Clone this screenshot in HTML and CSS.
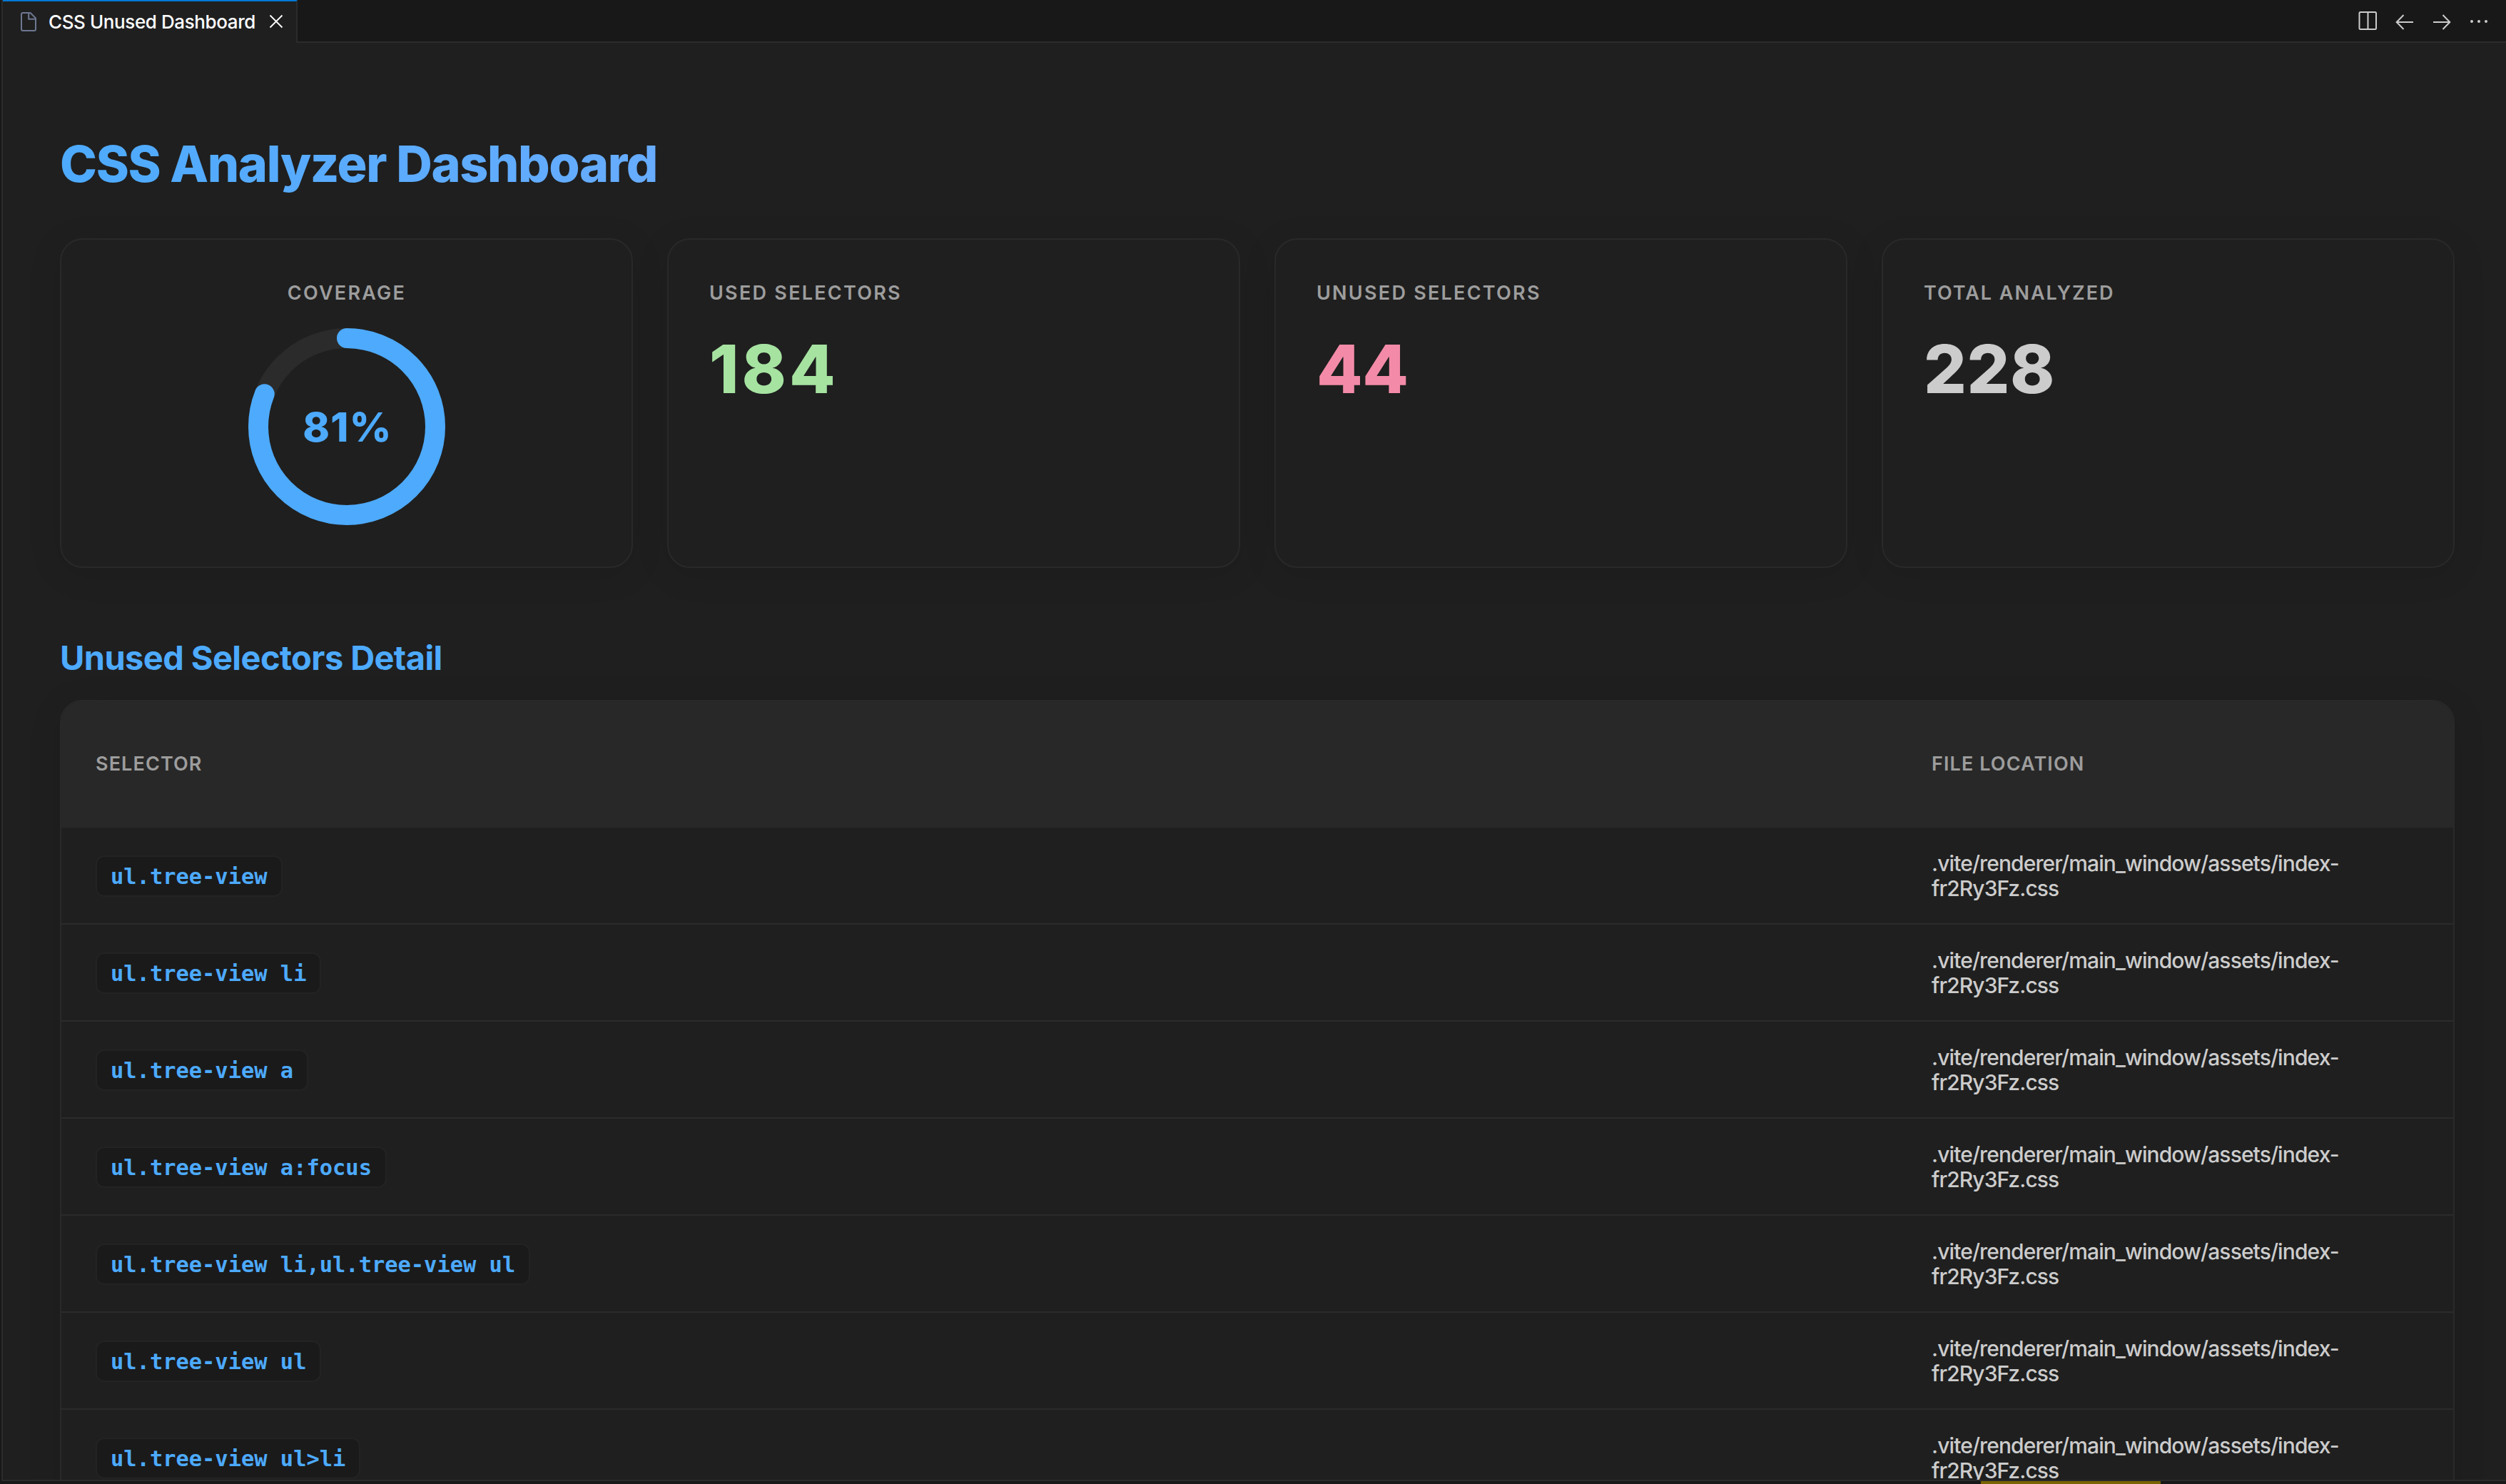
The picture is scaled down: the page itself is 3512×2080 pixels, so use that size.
FILE: index.html
```html
<!DOCTYPE html>
<html lang="en">
<head>
<meta charset="utf-8">
<title>CSS Unused Dashboard</title>
<link rel="stylesheet" href="styles.css">
</head>
<body>
<div class="window">
  <div class="editor">
    <header class="tabbar">
      <div class="tab">
        <svg class="tab-file" width="24" height="30" viewBox="0 0 24 30" fill="none" stroke="#6d7891" stroke-width="2" stroke-linejoin="round"><path d="M4 3H14.5L22 10.5V26a2 2 0 0 1-2 2H4a2 2 0 0 1-2-2V5a2 2 0 0 1 2-2z"/><path d="M12.2 3V11.8H22"/></svg>
        <span class="tab-title">CSS Unused Dashboard</span>
        <svg class="tab-close" width="20" height="20" viewBox="0 0 20 20" fill="none" stroke="#fff" stroke-width="1.8"><path d="M1.5 1.5L18.5 18.5M18.5 1.5L1.5 18.5"/></svg>
      </div>
      <div class="actions">
        <svg width="26" height="26" viewBox="0 0 26 26" fill="none" stroke="#ccc" stroke-width="2"><rect x="1.500" y="1" width="23.500" height="24" rx="1.5"/><path d="M13.500 1V25"/></svg>
        <svg width="26" height="26" viewBox="0 0 26 26" fill="none" stroke="#ccc" stroke-width="2"><path d="M25 15H2M11.500 5L1.700 15L11.500 25"/></svg>
        <svg width="26" height="26" viewBox="0 0 26 26" fill="none" stroke="#ccc" stroke-width="2"><path d="M1 15H24M14.500 5L24.300 15L14.500 25"/></svg>
        <svg width="26" height="26" viewBox="0 0 26 26" fill="#ccc"><circle cx="3" cy="14" r="2"/><circle cx="13" cy="14" r="2"/><circle cx="23" cy="14" r="2"/></svg>
      </div>
    </header>
    <main class="dashboard">
      <h1 class="title">CSS Analyzer Dashboard</h1>
      <section class="cards">
        <article class="card card-coverage">
          <h3 class="label">COVERAGE</h3>
          <div class="ring">
            <svg width="280" height="280" viewBox="0 0 280 280" fill="none" stroke-width="28"><circle cx="140" cy="140" r="124" stroke="#2b2b2b"/><circle cx="140" cy="140" r="124" stroke="#4daafc" stroke-linecap="round" pathLength="100" stroke-dasharray="81 100" transform="rotate(-90 140 140)"/></svg>
            <span class="percent">81%</span>
          </div>
        </article>
        <article class="card">
          <h3 class="label">USED SELECTORS</h3>
          <div class="value value-used">184</div>
        </article>
        <article class="card">
          <h3 class="label">UNUSED SELECTORS</h3>
          <div class="value value-unused">44</div>
        </article>
        <article class="card">
          <h3 class="label label-total">TOTAL ANALYZED</h3>
          <div class="value">228</div>
        </article>
      </section>
      <h2 class="subtitle">Unused Selectors Detail</h2>
      <section class="table">
        <div class="head"><div class="cell">SELECTOR</div><div class="cell">FILE LOCATION</div></div>
        <div class="row"><div class="cell"><code class="chip">ul.tree-view</code></div><div class="cell path">.vite/renderer/main_window/assets/index-fr2Ry3Fz.css</div></div>
        <div class="row"><div class="cell"><code class="chip">ul.tree-view li</code></div><div class="cell path">.vite/renderer/main_window/assets/index-fr2Ry3Fz.css</div></div>
        <div class="row"><div class="cell"><code class="chip">ul.tree-view a</code></div><div class="cell path">.vite/renderer/main_window/assets/index-fr2Ry3Fz.css</div></div>
        <div class="row"><div class="cell"><code class="chip">ul.tree-view a:focus</code></div><div class="cell path">.vite/renderer/main_window/assets/index-fr2Ry3Fz.css</div></div>
        <div class="row"><div class="cell"><code class="chip">ul.tree-view li,ul.tree-view ul</code></div><div class="cell path">.vite/renderer/main_window/assets/index-fr2Ry3Fz.css</div></div>
        <div class="row"><div class="cell"><code class="chip">ul.tree-view ul</code></div><div class="cell path">.vite/renderer/main_window/assets/index-fr2Ry3Fz.css</div></div>
        <div class="row"><div class="cell"><code class="chip">ul.tree-view ul&gt;li</code></div><div class="cell path">.vite/renderer/main_window/assets/index-fr2Ry3Fz.css</div></div>
      </section>
    </main>
  </div>
  <footer class="statusbar"><div class="status-warning"></div></footer>
</div>
</body>
</html>
```
FILE: styles.css
```css
* { box-sizing: border-box; }
body { margin: 0; background: #181818; font-family: Inter, "Liberation Sans", sans-serif; color: #ccc; }
h1, h2, h3 { margin: 0; }
svg { display: block; flex: none; }

.window { width: 3512px; height: 2080px; display: flex; flex-direction: column; overflow: hidden; }
.editor { height: 2076px; flex: none; margin-left: 2px; border-left: 2px solid #2b2b2b; background: #1f1f1f; overflow: hidden; border-bottom: 2px solid #2b2b2b; }

/* Tab strip */
.tabbar { height: 60px; display: flex; background: #181818; }
.tab { width: 413px; height: 60px; flex: none; display: flex; align-items: center; padding: 0 0 2px 24px; background: #1f1f1f; border-top: 2px solid #0078d4; border-right: 2px solid #2b2b2b; }
.tab-title { width: 308px; margin-left: 16px; padding-top: 2px; font-size: 26px; font-weight: 450; line-height: 32px; letter-spacing: -0.4px; color: #fff; white-space: nowrap; }
.actions { flex: 1; display: flex; justify-content: flex-end; align-items: center; gap: 26px; padding-right: 25px; border-bottom: 2px solid #2b2b2b; }
.tab-close { margin-left: 1px; }

.dashboard { padding: 130px 72px 0 80px; }
.title { width: fit-content; margin-bottom: 64px; font-size: 70px; font-weight: 800; line-height: 80px; letter-spacing: -1.38px; color: transparent; background: linear-gradient(90deg, #4daafc, #67acff); -webkit-background-clip: text; background-clip: text; }

/* Summary cards */
.cards { display: grid; grid-template-columns: repeat(4, 1fr); gap: 48px; }
.card { height: 462px; padding: 57px 56px 55px 57px; border: 2px solid #292929; border-radius: 32px; background: #1f1f1f; box-shadow: 0 8px 48px rgba(0, 0, 0, .1); }
.card-coverage { display: flex; flex-direction: column; align-items: center; }
.label { font-size: 27px; font-weight: 600; line-height: 36px; letter-spacing: 2.25px; color: #9d9d9d; white-space: nowrap; }
.label-total { letter-spacing: 1.96px; }
.value { margin-top: 41px; font-size: 94px; font-weight: 850; line-height: 94px; letter-spacing: 0.5px; }
.value-used { color: #a6e3a1; letter-spacing: 4px; }
.value-unused { color: #f38ba8; letter-spacing: -0.5px; }
.ring { display: grid; place-items: center; margin-top: 29px; }
.ring > * { grid-area: 1 / 1; }
.percent { padding: 2px 0 0 2px; font-size: 57px; font-weight: 800; line-height: 60px; letter-spacing: 1.3px; color: #4daafc; }

/* Selector table */
.subtitle { margin: 98px 0 31px; font-size: 47px; font-weight: 700; line-height: 56px; letter-spacing: -0.6px; color: #4daafc; }
.table { border: 2px solid #292929; border-radius: 32px; overflow: hidden; box-shadow: 0 8px 48px rgba(0, 0, 0, .1); }
.head, .row { display: grid; grid-template-columns: 2573px 1fr; align-items: center; }
.head { height: 177px; padding-bottom: 2px; background: #282828; font-size: 27px; font-weight: 600; line-height: 34px; letter-spacing: 1.1px; color: #9d9d9d; }
.row { height: 136px; border-bottom: 2px solid #2b2b2b; }
.cell { padding: 0 48px; }
.path { padding-top: 2px; font-size: 30px; font-weight: 450; line-height: 35px; letter-spacing: -0.9px; }
.chip { display: block; width: fit-content; height: 58px; margin-top: 2px; padding: 1px 19px 0; border: 2px solid #232323; border-radius: 12px; background: #1a1a1a; font: 700 30.400px/54px "DejaVu Sans Mono", monospace; color: #4daafc; white-space: pre; }

.statusbar { height: 4px; flex: none; background: #181818; }
.status-warning { width: 252px; height: 4px; margin-left: 2776px; background: #7a6400; }
```
